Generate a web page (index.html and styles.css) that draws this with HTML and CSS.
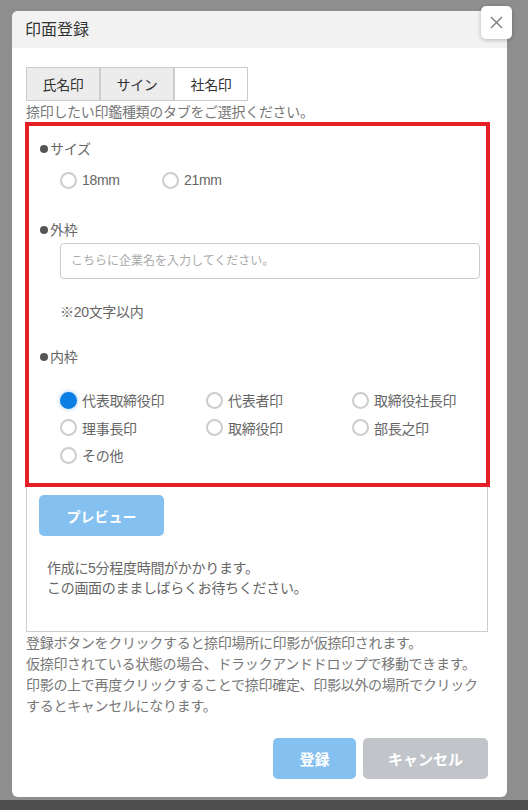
FILE: index.html
```html
<!DOCTYPE html>
<html>
<head>
    <title>印面登録</title>
    <link rel="stylesheet" href="styles.css">
</head>
<body>
    <div class="modal">
        <div class="modal-header">印面登録</div>
        <button class="close-btn" type="button">
            <svg width="13" height="13" viewBox="0 0 13 13"><path d="M1 1L12 12M12 1L1 12" stroke="#7a7a7a" stroke-width="1.4" fill="none"/></svg>
        </button>
        <div class="modal-body">
            <div class="tabs">
                <div class="tab">氏名印</div>
                <div class="tab">サイン</div>
                <div class="tab active">社名印</div>
            </div>
            <p class="hint">捺印したい印鑑種類のタブをご選択ください。</p>

            <div class="panel">
                <div class="marked">
                    <div class="label">サイズ</div>
                    <div class="size-options">
                        <label class="opt"><span class="radio"></span>18mm</label>
                        <label class="opt"><span class="radio"></span>21mm</label>
                    </div>

                    <div class="label gap-30">外枠</div>
                    <input class="name-input" type="text" placeholder="こちらに企業名を入力してください。">
                    <p class="note">※20文字以内</p>

                    <div class="label gap-25">内枠</div>
                    <div class="inner-options">
                        <label class="opt"><span class="radio checked"></span>代表取締役印</label>
                        <label class="opt"><span class="radio"></span>代表者印</label>
                        <label class="opt"><span class="radio"></span>取締役社長印</label>
                        <label class="opt"><span class="radio"></span>理事長印</label>
                        <label class="opt"><span class="radio"></span>取締役印</label>
                        <label class="opt"><span class="radio"></span>部長之印</label>
                        <label class="opt"><span class="radio"></span>その他</label>
                    </div>
                </div>
                <button class="preview-btn" type="button">プレビュー</button>
                <p class="wait">作成に5分程度時間がかかります。<br>この画面のまましばらくお待ちください。</p>
            </div>

            <p class="notes">登録ボタンをクリックすると捺印場所に印影が仮捺印されます。<br>仮捺印されている状態の場合、ドラックアンドドロップで移動できます。<br>印影の上で再度クリックすることで捺印確定、印影以外の場所でクリック<br>するとキャンセルになります。</p>

            <div class="footer">
                <button class="btn btn-save" type="button">登録</button>
                <button class="btn btn-cancel" type="button">キャンセル</button>
            </div>
        </div>
    </div>
</body>
</html>
```

FILE: styles.css
```css
body {
    font-family: "Liberation Sans", "Noto Sans CJK JP", sans-serif;
    margin: 0;
    padding: 11px 0 0 12px;
    height: 810px;
    box-sizing: border-box;
    overflow: hidden;
    color: #666;
    background: linear-gradient(#8e8e8e 0, #8e8e8e 800px, #4d4d4d 800px);
}

.modal {
    position: relative;
    width: 495px;
    background: #fff;
    border-radius: 6px;
    padding-bottom: 18px;
}

.modal-header {
    height: 37px;
    line-height: 37px;
    padding-left: 13px;
    font-size: 16px;
    color: #333;
    background: #f2f2f2;
    border-radius: 6px 6px 0 0;
}

.close-btn {
    position: absolute;
    top: -5px;
    right: -5px;
    width: 31px;
    height: 33px;
    padding: 0;
    border: none;
    border-radius: 5px;
    background: #fff;
    box-shadow: 0 1px 4px rgba(0, 0, 0, 0.25);
    display: flex;
    align-items: center;
    justify-content: center;
}

.modal-body {
    padding: 19px 19px 0 14px;
    font-size: 14px;
    letter-spacing: -0.3px;
}

.tabs {
    display: flex;
}

.tab {
    width: 74px;
    height: 34px;
    box-sizing: border-box;
    border: 1px solid #ccc;
    background: #ececec;
    color: #333;
    display: flex;
    align-items: center;
    justify-content: center;
}

.tab.active {
    background: #fff;
}

.hint {
    margin: 1px 0 0;
    line-height: 20px;
    color: #777;
}

.panel {
    border: 1px solid #ccc;
    border-top: none;
    padding-bottom: 33px;
}

.marked {
    border: 4px solid #e61e25;
    margin: 0 -3px 0 -2px;
    padding: 13px 11px 18px;
}

.label {
    line-height: 20px;
    color: #666;
}

.label::before {
    content: "";
    display: inline-block;
    width: 8px;
    height: 8px;
    border-radius: 50%;
    background: #555;
    margin-right: 2px;
    vertical-align: 1px;
}

.gap-30 {
    margin-top: 30px;
}

.gap-25 {
    margin-top: 25px;
}

.opt {
    display: flex;
    align-items: center;
    gap: 5px;
    height: 20px;
    color: #666;
}

.radio {
    width: 17px;
    height: 17px;
    box-sizing: border-box;
    border: 2px solid #ccc;
    border-radius: 50%;
    background: #fff;
}

.radio.checked {
    border-color: #0b7fe3;
    background: #0b7fe3;
    box-shadow: 0 0 4px rgba(11, 127, 227, 0.45);
}

.size-options {
    display: flex;
    margin: 11px 0 0 20px;
}

.size-options .opt {
    width: 102px;
}

.name-input {
    display: block;
    margin: 3px 0 0 20px;
    width: 420px;
    height: 36px;
    box-sizing: border-box;
    border: 1px solid #ccc;
    border-radius: 4px;
    padding: 0 10px;
    font-family: inherit;
    font-size: 12px;
}

.name-input::placeholder {
    color: #aaa;
}

.note {
    margin: 23px 0 0 20px;
    line-height: 20px;
}

.inner-options {
    display: grid;
    grid-template-columns: 146px 146px auto;
    row-gap: 7.5px;
    margin: 23px 0 0 20px;
}

.preview-btn {
    display: block;
    margin: 8px 0 0 12px;
    width: 125px;
    height: 41px;
    border: none;
    border-radius: 5px;
    background: #85c1f0;
    color: #fff;
    font-family: inherit;
    font-size: 14px;
    font-weight: bold;
}

.wait {
    margin: 22px 0 0 20px;
    line-height: 20px;
}

.notes {
    margin: 1px 0 0;
    line-height: 21px;
    color: #777;
    white-space: nowrap;
}

.footer {
    display: flex;
    justify-content: flex-end;
    gap: 7px;
    margin-top: 21px;
}

.btn {
    height: 41px;
    border: none;
    border-radius: 5px;
    color: #fff;
    font-family: inherit;
    font-size: 15px;
    font-weight: bold;
}

.btn-save {
    width: 83px;
    background: #85c1f0;
}

.btn-cancel {
    width: 125px;
    background: #c1c5c9;
}
```
